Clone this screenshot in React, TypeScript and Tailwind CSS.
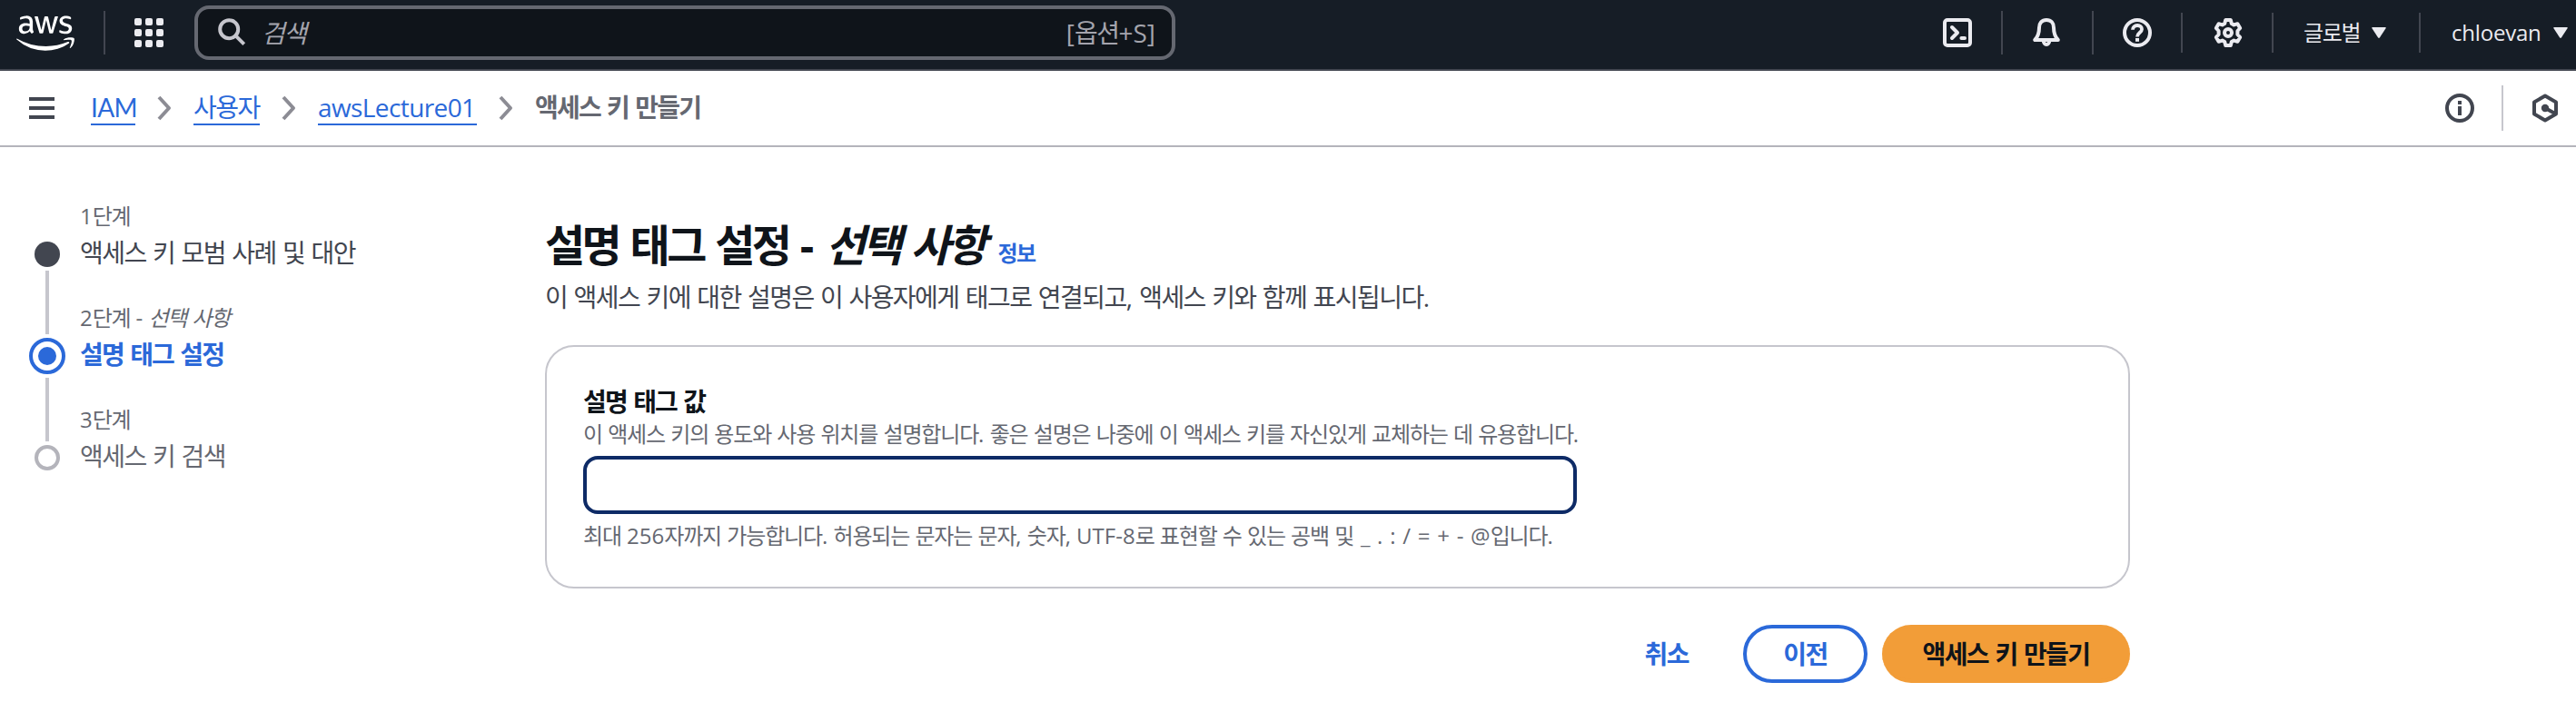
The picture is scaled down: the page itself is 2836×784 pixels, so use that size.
import { Fragment } from "react";
import type { ReactNode } from "react";
import { FaAws } from "react-icons/fa6";

/* Hangul runs are set slightly tighter than Latin, digits and spaces. */
function T({ children, hangul = "tracking-[-0.055em]" }: { children: string; hangul?: string }) {
  const runs = children.split(/([\uac00-\ud7a3]+)/).filter(Boolean);
  return (
    <>
      {runs.map((run, i) =>
        /[\uac00-\ud7a3]/.test(run) ? (
          <span key={i} className={hangul}>{run}</span>
        ) : (
          <Fragment key={i}>{run}</Fragment>
        )
      )}
    </>
  );
}

const BOLD = "tracking-[-0.065em]";
const HEADING = "tracking-[-0.075em]";
const SMALL = "tracking-[-0.048em]";

function Icon({ children, className = "" }: { children: ReactNode; className?: string }) {
  return (
    <svg viewBox="0 0 16 16" fill="none" stroke="currentColor" strokeWidth="2" className={`size-8 shrink-0 ${className}`}>
      {children}
    </svg>
  );
}

function Chevron() {
  return (
    <svg viewBox="0 0 16 28" fill="none" stroke="#8c8c94" strokeWidth="4" strokeLinejoin="round" className="h-7 w-4 shrink-0">
      <path d="M2 2 13 14 2 26" />
    </svg>
  );
}

function Caret() {
  return (
    <svg viewBox="0 0 16 12" fill="currentColor" className="h-3 w-4 shrink-0">
      <path d="M1 0h14q1.200 0 .7 1L9 11.300q-1 1.200-2 0L.3 1Q-.2 0 1 0Z" />
    </svg>
  );
}

function TopBar() {
  return (
    <header className="flex h-[78px] items-start border-b-2 border-[#424650] bg-[#161d26] text-[#ebebf0]">
      <div className="flex h-[72px] w-[114px] items-center pl-[18px]">
        <FaAws className="h-[51px] w-16 text-white" />
      </div>
      <div className="mt-3 h-12 w-0.5 bg-[#424650]" />
      <div className="ml-8 mt-5 grid size-8 grid-cols-3 grid-rows-3 gap-1">
        {Array.from({ length: 9 }, (_, i) => (
          <span key={i} className="rounded-[2px] bg-[#ebebf0]" />
        ))}
      </div>
      <div className="ml-[34px] mt-1.5 flex h-[60px] w-[1080px] items-center rounded-2xl border-4 border-[#656871] bg-[#0f141a] pl-[22px] pr-[18px] text-[28px] leading-none text-[#a4a4ad]">
        <svg viewBox="0 0 32 32" fill="none" stroke="#c6c6cd" strokeWidth="4" className="size-8">
          <circle cx="12.200" cy="12.200" r="10" />
          <path d="m19.200 19.200 9.500 9.500" />
        </svg>
        <span className="ml-4 italic"><T>검색</T></span>
        <span className="ml-auto"><T>[옵션+S]</T></span>
      </div>
      <Icon className="ml-auto mt-5">
        <rect x="1" y="1" width="14" height="14" rx="1.500" />
        <path d="M5 5l3 3-3 3" strokeLinecap="round" strokeLinejoin="round" />
        <path d="M10.200 11h1.800" strokeLinecap="round" />
      </Icon>
      <div className="ml-8 mt-3 h-12 w-0.5 bg-[#424650]" />
      <Icon className="ml-8 mt-5">
        <path d="M8 1C5.400 1 4 2.800 4 5.200c0 3.300-.6 4.900-2.400 6.800h12.800C12.600 10.100 12 8.500 12 5.200 12 2.800 10.600 1 8 1Z" strokeLinejoin="round" />
        <path d="M6.400 12.500a1.600 2 0 0 0 3.200 0" />
      </Icon>
      <div className="ml-[34px] mt-3 h-12 w-0.5 bg-[#424650]" />
      <Icon className="ml-8 mt-5">
        <circle cx="8" cy="8" r="7" />
        <path d="M5.500 6.400C5.500 5 6.500 4 8.100 4c1.500 0 2.400.9 2.400 2.100 0 1.900-2.500 2-2.500 4.100" strokeWidth="1.900" />
        <path d="M8 11v1.900" />
      </Icon>
      <div className="ml-8 mt-3.5 h-11 w-0.5 bg-[#424650]" />
      <Icon className="ml-[34px] mt-5">
        <path
          d="M6.600 1h2.800l.5 2 1.300.7 2-.6 1.400 2.400L13.200 7v2l1.400 1.500-1.400 2.400-2-.6-1.300.7-.5 2H6.600l-.5-2-1.300-.7-2 .6-1.400-2.400L2.800 9V7L1.400 5.500l1.400-2.400 2 .6L6.100 3Z"
          strokeLinejoin="round"
        />
        <circle cx="8" cy="8" r="2" />
      </Icon>
      <div className="ml-8 mt-3.5 h-11 w-0.5 bg-[#424650]" />
      <div className="ml-[33px] flex h-[72px] w-[91px] items-center justify-between text-[24px] leading-none">
        <span><T>글로벌</T></span>
        <Caret />
      </div>
      <div className="ml-9 mt-3.5 h-11 w-0.5 bg-[#424650]" />
      <div className="ml-[34px] mr-[9px] flex h-[72px] w-[128px] items-center justify-between text-[24px] leading-none">
        <span className="font-medium tracking-[-0.2px]">chloevan</span>
        <Caret />
      </div>
    </header>
  );
}

function Crumb({ children, className = "" }: { children: string; className?: string }) {
  return (
    <a className={`h-[38px] whitespace-nowrap border-b-2 border-[#2b69d9] leading-[36px] text-[#2b69d9] ${className}`}>
      <T>{children}</T>
    </a>
  );
}

function BreadcrumbBar() {
  return (
    <nav className="flex h-[84px] items-center border-b-2 border-[#b4b4bb] text-[28px]">
      <div className="ml-8 flex h-6 w-7 flex-col justify-between">
        <span className="h-1 bg-[#424650]" />
        <span className="h-1 bg-[#424650]" />
        <span className="h-1 bg-[#424650]" />
      </div>
      <div className="ml-10 flex items-center gap-6">
        <Crumb className="w-[49px] font-['Lato'] tracking-[-0.6px]">IAM</Crumb>
        <Chevron />
        <Crumb className="w-[73px]">사용자</Crumb>
        <Chevron />
        <Crumb className="w-[175px] font-medium tracking-[-0.6px]">awsLecture01</Crumb>
        <Chevron />
        <span className="h-[38px] font-bold leading-[36px] text-[#656871]"><T hangul={BOLD}>액세스 키 만들기</T></span>
      </div>
      <Icon className="ml-auto text-[#424650]">
        <circle cx="8" cy="8" r="7" />
        <path d="M8 4v2M8 7v5" />
      </Icon>
      <div className="ml-[30px] h-[50px] w-0.5 bg-[#c6c6cd]" />
      <Icon className="ml-[30px] mr-[18px] text-[#424650]">
        <path d="M8 1.300 14 4.700v6.600L8 14.700 2 11.300V4.700Z" strokeLinejoin="round" />
        <path d="m8 8 5.500 3" />
        <circle cx="8" cy="8" r="2.100" fill="currentColor" stroke="none" />
      </Icon>
    </nav>
  );
}

function Step({ label, marker, title, className }: { label: ReactNode; marker: ReactNode; title: ReactNode; className: string }) {
  return (
    <li className="flex h-28 flex-col">
      <div className="h-10 pl-14 text-[24px] leading-[36px] text-[#656871]">{label}</div>
      <div className="flex h-10 items-center">
        <div className="flex w-10 justify-center">{marker}</div>
        <div className={`ml-4 whitespace-nowrap pb-1 text-[28px] leading-[36px] ${className}`}>{title}</div>
      </div>
    </li>
  );
}

function Steps() {
  return (
    <aside className="w-[568px] pt-[58px]">
      <div className="grid">
        <ol className="col-start-1 row-start-1 flex flex-col">
          <Step
            label={<T>1단계</T>}
            marker={<span className="size-7 rounded-full bg-[#424650]" />}
            title={<T>액세스 키 모범 사례 및 대안</T>}
            className="text-[#424650]"
          />
          <Step
            label={<><T>2단계 - </T><i><T>선택 사항</T></i></>}
            marker={
              <span className="flex size-10 items-center justify-center rounded-full border-4 border-[#2b69d9]">
                <span className="size-5 rounded-full bg-[#2b69d9]" />
              </span>
            }
            title={<T hangul={BOLD}>설명 태그 설정</T>}
            className="font-bold text-[#2b69d9]"
          />
          <Step
            label={<T>3단계</T>}
            marker={<span className="size-7 rounded-full border-4 border-[#b4b4bb]" />}
            title={<T>액세스 키 검색</T>}
            className="text-[#656871]"
          />
        </ol>
        <div className="col-start-1 row-start-1 ml-[18px] flex w-1 flex-col gap-12 pt-[78px]">
          <span className="h-[70px] bg-[#c6c6cd]" />
          <span className="h-[70px] bg-[#c6c6cd]" />
        </div>
      </div>
    </aside>
  );
}

function Content() {
  return (
    <main className="w-[1745px] pt-[78px]">
      <div className="flex h-[60px] items-baseline whitespace-nowrap">
        <h1 className="text-[48px] font-bold leading-[60px] text-[#0f141a]">
          <T hangul={HEADING}>설명 태그 설정 - </T><i><T hangul={HEADING}>선택 사항</T></i>
        </h1>
        <a className="ml-[15px] text-[24px] font-bold leading-none text-[#2b69d9]"><T hangul={BOLD}>정보</T></a>
      </div>
      <p className="mt-[7px] h-10 whitespace-nowrap text-[28px] leading-[40px] text-[#424650]">
        <T>이 액세스 키에 대한 설명은 이 사용자에게 태그로 연결되고, 액세스 키와 함께 표시됩니다.</T>
      </p>
      <section className="mt-[33px] h-[268px] rounded-[32px] border-2 border-[#c6c6cd] pl-10 pt-10">
        <div className="h-10 text-[28px] font-bold leading-[40px] text-[#0f141a]"><T hangul={BOLD}>설명 태그 값</T></div>
        <div className="h-10 whitespace-nowrap text-[24px] leading-[32px] text-[#656871]">
          <T hangul={SMALL}>이 액세스 키의 용도와 사용 위치를 설명합니다. 좋은 설명은 나중에 이 액세스 키를 자신있게 교체하는 데 유용합니다.</T>
        </div>
        <input className="block h-16 w-[1094px] rounded-2xl border-4 border-[#0e2b66] px-6 text-[28px] outline-none" />
        <div className="mt-2 whitespace-nowrap text-[24px] leading-[32px] text-[#656871]">
          <T hangul={SMALL}>최대 256자까지 가능합니다. 허용되는 문자는 문자, 숫자, UTF-8로 표현할 수 있는 공백 및</T>
          <span className="[word-spacing:1.500px]"><T hangul={SMALL}>{" _ . : / = + - @입니다."}</T></span>
        </div>
      </section>
      <div className="mt-10 flex h-16 justify-end text-[28px] font-bold leading-[56px]">
        <button className="mr-[60px] border-y-4 border-transparent text-[#2b69d9]"><T>취소</T></button>
        <button className="w-[137px] rounded-full border-4 border-[#2b69d9] text-[#2b69d9]"><T>이전</T></button>
        <button className="ml-4 w-[273px] rounded-full border-y-4 border-[#f29d38] bg-[#f29d38] text-[#0f141a]"><T>액세스 키 만들기</T></button>
      </div>
    </main>
  );
}

export default function App() {
  return (
    <div lang="ko" className="h-[784px] w-[2836px] overflow-hidden bg-white font-['Open_Sans','Noto_Sans_CJK_KR',sans-serif]">
      <TopBar />
      <BreadcrumbBar />
      <div className="flex pl-8">
        <Steps />
        <Content />
      </div>
    </div>
  );
}
